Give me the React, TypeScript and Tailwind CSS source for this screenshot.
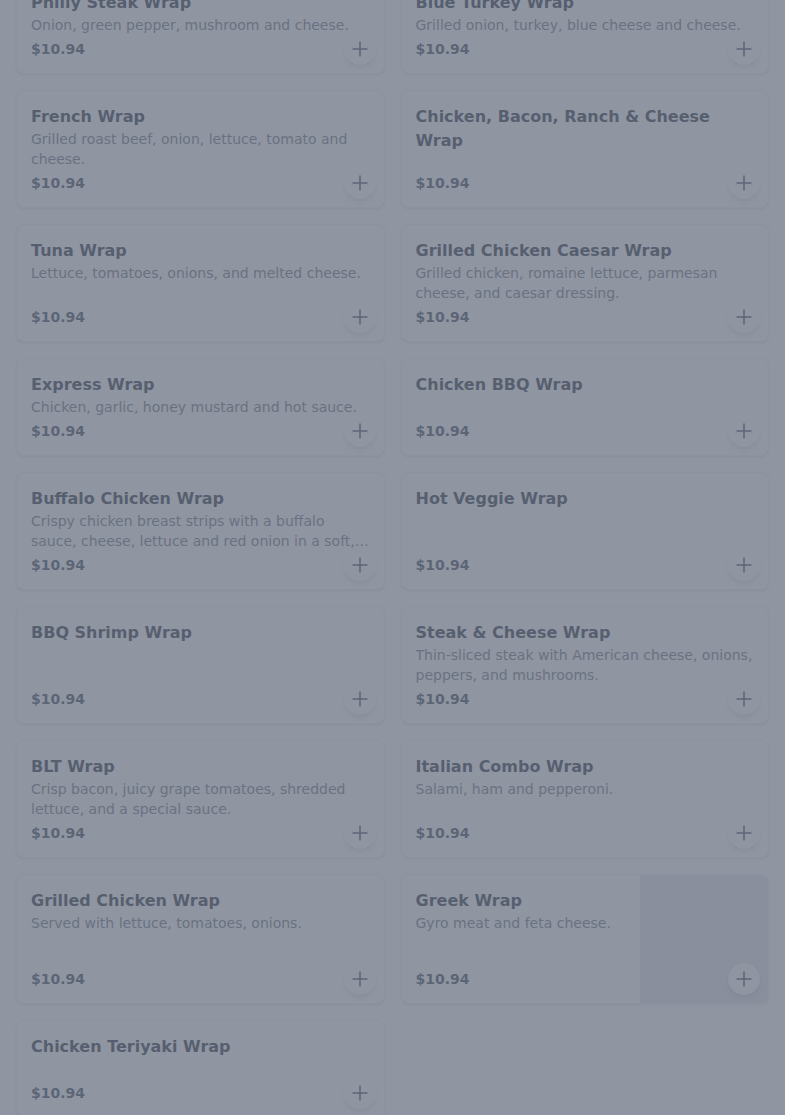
import { Plus } from 'lucide-react'

interface MenuItem {
  name: string
  description?: string
  price: number
  hasImage?: boolean
}

const items: MenuItem[] = [
  { name: 'Philly Steak Wrap', description: 'Onion, green pepper, mushroom and cheese.', price: 10.94 },
  { name: 'Blue Turkey Wrap', description: 'Grilled onion, turkey, blue cheese and cheese.', price: 10.94 },
  { name: 'French Wrap', description: 'Grilled roast beef, onion, lettuce, tomato and cheese.', price: 10.94 },
  { name: 'Chicken, Bacon, Ranch & Cheese Wrap', price: 10.94 },
  { name: 'Tuna Wrap', description: 'Lettuce, tomatoes, onions, and melted cheese.', price: 10.94 },
  { name: 'Grilled Chicken Caesar Wrap', description: 'Grilled chicken, romaine lettuce, parmesan cheese, and caesar dressing.', price: 10.94 },
  { name: 'Express Wrap', description: 'Chicken, garlic, honey mustard and hot sauce.', price: 10.94 },
  { name: 'Chicken BBQ Wrap', price: 10.94 },
  { name: 'Buffalo Chicken Wrap', description: 'Crispy chicken breast strips with a buffalo sauce, cheese, lettuce and red onion in a soft, warm flour tortilla.', price: 10.94 },
  { name: 'Hot Veggie Wrap', price: 10.94 },
  { name: 'BBQ Shrimp Wrap', price: 10.94 },
  { name: 'Steak & Cheese Wrap', description: 'Thin-sliced steak with American cheese, onions, peppers, and mushrooms.', price: 10.94 },
  { name: 'BLT Wrap', description: 'Crisp bacon, juicy grape tomatoes, shredded lettuce, and a special sauce.', price: 10.94 },
  { name: 'Italian Combo Wrap', description: 'Salami, ham and pepperoni.', price: 10.94 },
  { name: 'Grilled Chicken Wrap', description: 'Served with lettuce, tomatoes, onions.', price: 10.94 },
  { name: 'Greek Wrap', description: 'Gyro meat and feta cheese.', price: 10.94, hasImage: true },
  { name: 'Chicken Teriyaki Wrap', price: 10.94 },
]

function MenuCard({ item }: { item: MenuItem }) {
  return (
    <div className="relative flex min-h-[98px] overflow-hidden rounded-lg border border-gray-100 bg-white shadow-sm">
      <div className="flex min-w-0 flex-1 flex-col p-3.5">
        <h3 className="text-base font-bold text-gray-800">{item.name}</h3>
        {item.description && <p className="line-clamp-2 text-sm text-gray-500">{item.description}</p>}
        <div className="mt-auto pt-1 text-sm font-bold text-gray-700">${item.price.toFixed(2)}</div>
      </div>
      {item.hasImage && <div className="h-32 w-32 shrink-0 bg-gray-200" />}
      {/* Add to cart */}
      <button className="absolute right-2 bottom-2 flex h-8 w-8 items-center justify-center rounded-full bg-white text-gray-700 shadow-md">
        <Plus size={24} strokeWidth={1.5} />
      </button>
    </div>
  )
}

export default function App() {
  return (
    <div className="relative min-h-screen overflow-hidden bg-white font-['DejaVu_Sans',sans-serif]">
      <div className="-mt-[24px] grid grid-cols-2 gap-4 px-4 pb-4">
        {items.map((item) => (
          <MenuCard key={item.name} item={item} />
        ))}
      </div>
      {/* Modal backdrop */}
      <div className="fixed inset-0 bg-gray-500/75" />
    </div>
  )
}
